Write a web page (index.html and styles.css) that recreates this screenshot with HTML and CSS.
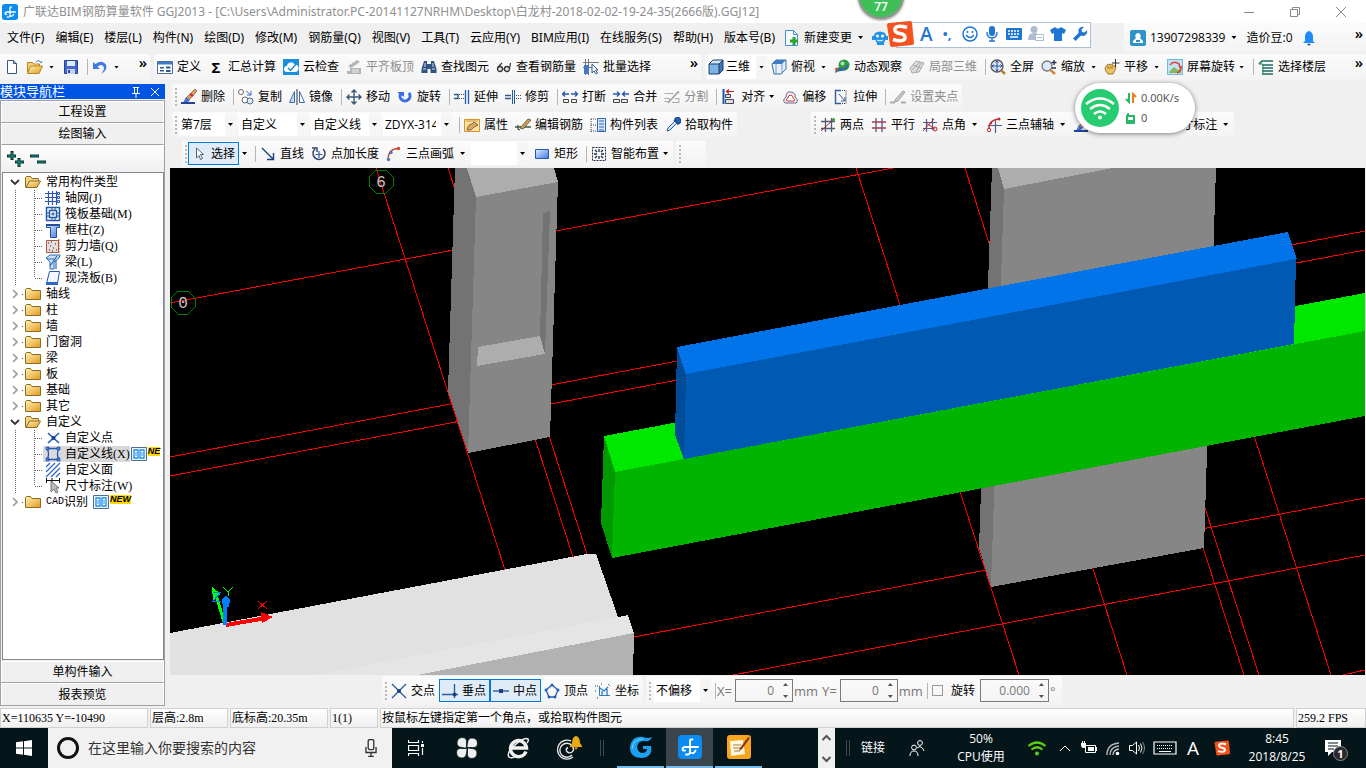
FILE: index.html
```html
<!DOCTYPE html>
<html lang="zh-CN">
<head>
    <meta charset="UTF-8">
    <meta name="viewport" content="width=device-width, initial-scale=1.0">
    <title>广联达BIM钢筋算量软件 GGJ2013</title>
    <link rel="stylesheet" href="styles.css">
</head>
<body>
    <svg class="sprite" aria-hidden="true">
        <defs>
            <linearGradient id="g-folder" x1="0" y1="0" x2="1" y2="1">
                <stop offset="0" stop-color="#fff3b8"/><stop offset="1" stop-color="#e59b1c"/>
            </linearGradient>
            <linearGradient id="g-blue" x1="0" y1="0" x2="1" y2="1">
                <stop offset="0" stop-color="#e4f0ff"/><stop offset="1" stop-color="#3f76e0"/>
            </linearGradient>
        </defs>
        <symbol id="i-app" viewBox="0 0 24 24">
            <rect width="24" height="24" rx="4" fill="#0a8cf0"/>
            <path d="M12 12V6q0-2 2.500-1.500M12 11v6q0 3-4 2.500M20 12H7.500q-3 0-3 2t2.500 1.500M12 17.500q4 2 5.500-2" fill="none" stroke="#fff" stroke-width="1.900" stroke-linecap="round"/>
        </symbol>
        <symbol id="i-new" viewBox="0 0 16 16"><path d="M3.500 1.500h6l3 3v10h-9z" fill="#fbfdff" stroke="#3a5680"/><path d="M9.500 1.500v3h3" fill="#9db8dc" stroke="#3a5680"/></symbol>
        <symbol id="i-open" viewBox="0 0 16 16"><path d="M.5 13.500v-10h5l1 1.500h6v3" fill="#f5d37a" stroke="#b58421"/><path d="M.5 14.500l3-7.500h12l-3.500 7.500z" fill="url(#g-folder)" stroke="#b58421"/><path d="M9 3q3-3 5 1l1-2" fill="none" stroke="#4a76b8"/></symbol>
        <symbol id="i-save" viewBox="0 0 16 16"><path d="M1.500 1.500h13v13h-13z" fill="#4468c8" stroke="#26409a"/><path d="M4 2h8v5H4z" fill="#dfe8fa"/><path d="M4 10h8v5H4z" fill="#c6d3ee"/><path d="M5 11h2v3H5z" fill="#26409a"/></symbol>
        <symbol id="i-undo" viewBox="0 0 16 16"><path d="M1 3v7h7L5.500 7.500q4-3 6 0 1.500 3-2.500 7.500 7-4 5-9.500-4-5-10.500-.5z" fill="#3f7be0"/></symbol>
        <symbol id="i-define" viewBox="0 0 16 16"><path d="M.5 2.500h15v12H.5z" fill="#fff" stroke="#4a6ea8"/><path d="M1 3h14v2.500H1z" fill="#3f78c8"/><path d="M3 8h4v1.500H3zM3 11h4v1.500H3zM9 7.500h4.500v2H9zM9 11h4.500v2H9z" fill="#33598f"/></symbol>
        <symbol id="i-cloud" viewBox="0 0 16 16"><rect width="16" height="16" fill="#1c8fdc"/><path d="M4 13a3 3 0 0 1 0-6 4 4 0 0 1 7.500-1.500A3.700 3.700 0 0 1 12 13z" fill="#fff"/><path d="M5 9l2.500 2.500L14 4" fill="none" stroke="#1c8fdc" stroke-width="1.500"/></symbol>
        <symbol id="i-flat" viewBox="0 0 16 16"><path d="M2 7l9-6 3 2-9 6zM4 9h11v6H4zM1 12h6v3H1z" fill="#b4b4b4"/><path d="M6 11h7M6 13h7" stroke="#eee"/></symbol>
        <symbol id="i-find" viewBox="0 0 16 16"><path d="M3 2h3v3h4V2h3l2.500 8v4H9.500v-4h-3v4H.5v-4z" fill="#31517e"/><path d="M2 10h3M11 10h3M4 4v4M12 4v4" stroke="#cfe0f7"/></symbol>
        <symbol id="i-glasses" viewBox="0 0 16 16"><circle cx="4" cy="10" r="2.500" fill="#dfe6ee" stroke="#333" stroke-width="1.300"/><circle cx="11" cy="10" r="2.500" fill="#dfe6ee" stroke="#333" stroke-width="1.300"/><path d="M6.500 10h2M2 8l4-4M13.500 10l1-6" fill="none" stroke="#333" stroke-width="1.200"/></symbol>
        <symbol id="i-batch" viewBox="0 0 16 16"><path d="M2.500 0v16M5.500 0v16M0 3.500h16M0 8.500h10" stroke="#777"/><path d="M1 6h5v9H1z" fill="#4676c4"/><path d="M9 5v9l2-2 2 3 1.500-1-2-3H15z" fill="#fff" stroke="#33598f"/></symbol>
        <symbol id="i-cube" viewBox="0 0 16 16"><path d="M1 5h10v10H1z" fill="#7fb3e4"/><path d="M1 5l4-4h10l-4 4z" fill="#cfe6fa"/><path d="M11 5l4-4v10l-4 4z" fill="#3f78b4"/><path d="M1 5l4-4h10v10l-4 4H1zM1 5h10v10M11 5l4-4" fill="none" stroke="#1c3f6a"/></symbol>
        <symbol id="i-top" viewBox="0 0 16 16"><path d="M1 5l4-4h10v9l-5 5H3z" fill="#e8f1fa" stroke="#3b6ea5"/><path d="M1 5l4-4h10l-4 4z" fill="#3f7ec0"/><path d="M11 5v10M5 5v10" stroke="#6f9ccb"/></symbol>
        <symbol id="i-orbit" viewBox="0 0 16 16"><circle cx="10" cy="6" r="5.500" fill="#2f9a48"/><circle cx="8.500" cy="4.500" r="2" fill="#a9e3a8"/><path d="M1 14q1-7 6-5 3 2 8-5-1 8-8 8-3 0-6 2z" fill="#2f6a9a"/><circle cx="2.500" cy="10" r="1.500" fill="#d05a28"/></symbol>
        <symbol id="i-local" viewBox="0 0 16 16"><path d="M1 9l6-7 8 2-5 9-7 1z" fill="#ddd" stroke="#a8a8a8"/><path d="M4 6l8 3M3 11l8-8M7 13l5-9" stroke="#a8a8a8"/></symbol>
        <symbol id="i-full" viewBox="0 0 16 16"><circle cx="7" cy="7" r="6" fill="#dbe9fa" stroke="#555" stroke-width="1.300"/><path d="M7 2v10M2 7h10M5.500 3.500L7 2l1.500 1.500M5.500 10.500L7 12l1.500-1.500M3.500 5.500L2 7l1.500 1.500M10.500 5.500L12 7l-1.500 1.500" fill="none" stroke="#2850a0"/><path d="M11.500 11.500l3.500 3.500" stroke="#c08030" stroke-width="2.500"/></symbol>
        <symbol id="i-zoom" viewBox="0 0 16 16"><circle cx="6" cy="7" r="5" fill="#dbe9fa" stroke="#777" stroke-width="1.300"/><path d="M9.500 11l4.500 4" stroke="#d08830" stroke-width="2.500"/><path d="M13 1v5M10.500 3.500h5M11 9h4" stroke="#203050" stroke-width="1.300"/></symbol>
        <symbol id="i-pan" viewBox="0 0 16 16"><path d="M1 9l2-3 2-1 1 1 2-1 1 2 2 0 1 2-2 4-1 2H4q-3-3-3-6z" fill="#eac36b" stroke="#a77b2a"/><path d="M11.500 0v8M8 4h7.500" stroke="#333"/><path d="M4 7v3M6 7v3M8 7v3" stroke="#a77b2a"/></symbol>
        <symbol id="i-spin" viewBox="0 0 16 16"><rect x=".5" y=".5" width="15" height="15" fill="#bfe3f7" stroke="#74b8de"/><path d="M2 13l5-5 4 3 3-2v5H2z" fill="#86b75c"/><path d="M3 6q4-5 9-1l1 4M10 14q5-2 4-7" fill="none" stroke="#e23c2c" stroke-width="1.500"/></symbol>
        <symbol id="i-floors" viewBox="0 0 16 16"><path d="M1 5l3-3h11M4 6h11M4 9h11M4 12h11M4 15h11" fill="none" stroke="#1f6a62" stroke-width="1.600"/><path d="M1 5h4v10" fill="none" stroke="#2b8a52"/></symbol>
        <symbol id="i-erase" viewBox="0 0 16 16"><path d="M14 0l2 2-8 9-3-2z" fill="#d7a05b" stroke="#7b4b22" stroke-width=".7"/><path d="M5 8l4 3-3 3H2z" fill="#4b6fd0"/><path d="M0 14h14" stroke="#22459a" stroke-width="2"/><path d="M9 5l3 2" stroke="#c02a2a" stroke-width="2"/></symbol>
        <symbol id="i-copy" viewBox="0 0 16 16"><circle cx="3" cy="3" r="2.500" fill="#fff" stroke="#666"/><circle cx="7" cy="11" r="3" fill="#fff" stroke="#666"/><circle cx="12" cy="12" r="3" fill="#dde6f4" stroke="#506a94"/><path d="M8 2l5 4M13 2v4H9" fill="none" stroke="#3d6cc0"/></symbol>
        <symbol id="i-mirror" viewBox="0 0 16 16"><path d="M.5 13.500l5-11v11z" fill="#c9daf3" stroke="#3d6cb0"/><path d="M15.500 13.500l-5-11v11z" fill="#fff" stroke="#3d6cb0"/><path d="M8 0v16" stroke="#333"/></symbol>
        <symbol id="i-move" viewBox="0 0 16 16"><path d="M8 1v14M1 8h14M5.500 3.500L8 1l2.500 2.500M5.500 12.500L8 15l2.500-2.500M3.500 5.500L1 8l2.500 2.500M12.500 5.500L15 8l-2.500 2.500" fill="none" stroke="#3c5878" stroke-width="1.400"/></symbol>
        <symbol id="i-rotate" viewBox="0 0 16 16"><path d="M4 4a5 5 0 1 0 8 0" fill="none" stroke="#3a6ee0" stroke-width="3"/><path d="M0 3h7v5z" fill="#3a6ee0"/></symbol>
        <symbol id="i-extend" viewBox="0 0 16 16"><path d="M0 5.500h4v4H0" fill="none" stroke="#30588e" stroke-width="1.400"/><path d="M5 5.500h5M5 9.500h5" stroke="#4a4a4a" stroke-dasharray="1 1"/><path d="M11.500 1v14M14.500 1v14" stroke="#1d5aa8" stroke-width="1.300"/></symbol>
        <symbol id="i-trim" viewBox="0 0 16 16"><path d="M0 6.500h6M0 9.500h6" stroke="#30588e" stroke-width="1.400"/><path d="M11 6.500h5M11 9.500h5" stroke="#4a4a4a" stroke-dasharray="1 1"/><path d="M7.500 1v14M9.500 1v14" stroke="#1d5aa8"/></symbol>
        <symbol id="i-break" viewBox="0 0 16 16"><path d="M1.500 10.500h5v3h-5zM9.500 10.500h5v3h-5z" fill="#eee" stroke="#444"/><path d="M0 5h7M3 2.500L.5 5 3 7.500M9 5h7M13 2.500L15.500 5 13 7.500" fill="none" stroke="#2b57b8" stroke-width="1.300"/></symbol>
        <symbol id="i-join" viewBox="0 0 16 16"><path d="M.5 10.500h6v3h-6zM8.500 10.500h6v3h-6z" fill="#eee" stroke="#444"/><path d="M0 5h7M4 2.500L6.500 5 4 7.500M9 5h7M12 2.500L9.500 5 12 7.500" fill="none" stroke="#2b57b8" stroke-width="1.300"/></symbol>
        <symbol id="i-split" viewBox="0 0 16 16"><path d="M.5 4.500h9M.5 12.500h5v-3h-5M8 13.500h7v-4h-4" fill="none" stroke="#aaa"/><path d="M4 14L14 3l1 1" fill="none" stroke="#a2a2a2" stroke-width="1.600"/></symbol>
        <symbol id="i-align" viewBox="0 0 16 16"><path d="M2.500 0v15" stroke="#1d5aa8" stroke-width="2"/><path d="M4.500 10.500h8v4h-8zM4.500 5.500h5v3h-5z" fill="#dde" stroke="#445"/><path d="M13 2.500H6M8 .5L5.500 2.500 8 4.500" fill="none" stroke="#c32020" stroke-width="1.200"/></symbol>
        <symbol id="i-offset" viewBox="0 0 16 16"><path d="M3 14q-3-3 1-6 0-6 5-5 5 1 4 5 4 3 1 6z" fill="#fdeae8" stroke="#5b6c9c"/><path d="M5 12q-2-2 1-3 0-3 3-3 2 1 2 3 3 1 1 3z" fill="#fff" stroke="#c33a3a"/></symbol>
        <symbol id="i-stretch" viewBox="0 0 16 16"><path d="M8 14.500H2.500v-13H8" fill="none" stroke="#31609c" stroke-width="1.400"/><path d="M9 1.500h4v13H9" fill="none" stroke="#333" stroke-dasharray="1 1"/><path d="M6 5l6 7M12 8v4H8" fill="none" stroke="#31609c"/></symbol>
        <symbol id="i-grip" viewBox="0 0 16 16"><path d="M0 13.500h5M11 13.500h5" stroke="#aaa" stroke-width="2"/><path d="M5 11L13 2l2 1-7 9-3 1z" fill="#c9c9c9" stroke="#a0a0a0"/></symbol>
        <symbol id="i-props" viewBox="0 0 16 16"><path d="M.5 2.500h15v12H.5z" fill="#fbe3a2" stroke="#d8962a"/><path d="M2 4h12" stroke="#d8962a"/><path d="M3 13q1-6 5-6l2-2 4 3-4 2-3 3z" fill="#e6a64a" stroke="#4c4c6c" stroke-width=".8"/></symbol>
        <symbol id="i-rebar" viewBox="0 0 16 16"><path d="M0 10h16M3 8v4l2 1" fill="none" stroke="#3b5a44" stroke-width="1.300"/><path d="M5 11l8-9 3 1-8 9z" fill="#c8a35d" stroke="#5c4424" stroke-width=".8"/></symbol>
        <symbol id="i-list" viewBox="0 0 16 16"><path d="M7.500 1.500h8v13h-8z" fill="#dce9fa" stroke="#2f64b0"/><path d="M9 4h5M9 7h5M9 10h5M9 13h5" stroke="#2f64b0"/><path d="M1 2h5M1 2v13M1 8h5M1 14h5" stroke="#444" stroke-dasharray="1 1"/></symbol>
        <symbol id="i-pick" viewBox="0 0 16 16"><path d="M2 14l1-3 7-7 2 2-7 7z" fill="#cfe4fb" stroke="#32639f"/><path d="M9 3l4 4M10 2q3-3 5 0t-2 5z" stroke="#1b4d8e" fill="#2d69b8" stroke-width="1.500"/></symbol>
        <symbol id="i-axis2" viewBox="0 0 16 16"><path d="M5.500 1v14M11.500 1v14M1 4.500h14M1 11.500h14" stroke="#555c78" stroke-width="1.300"/><path d="M1 14L14 2" stroke="#9c2424"/><circle cx="13.500" cy="2.500" r="1.500" fill="#36a036"/></symbol>
        <symbol id="i-axis" viewBox="0 0 16 16"><path d="M5 1v14M11 1v14" stroke="#43619c" stroke-width="1.300"/><path d="M1 5h14M1 11h14" stroke="#b03a4c" stroke-width="1.300"/></symbol>
        <symbol id="i-axisa" viewBox="0 0 16 16"><path d="M4.500 2v13M10.500 1v12M1 5.500h14M1 11.500h10" stroke="#4c5c8c" stroke-width="1.200"/><path d="M1 14L12 2M4 6l9 6" stroke="#b23030"/><circle cx="13" cy="12" r="2" fill="none" stroke="#c02222"/></symbol>
        <symbol id="i-axis3" viewBox="0 0 16 16"><path d="M9.500 3v13M2 8.500h14" stroke="#4c5c8c" stroke-width="1.200"/><path d="M3 13Q2 3 13 2" fill="none" stroke="#c52a2a" stroke-width="1.400"/><circle cx="3" cy="13" r="1.700" fill="#f0f0f0" stroke="#c52a2a"/><circle cx="5" cy="6" r="1.300" fill="#c52a2a"/><circle cx="13" cy="2" r="1.500" fill="#c52a2a"/></symbol>
        <symbol id="i-cursor" viewBox="0 0 16 16"><path d="M5.500 2v10l2.500-2.500 1.500 4 2-1-2-4h3z" fill="#fff" stroke="#52617c"/></symbol>
        <symbol id="i-line" viewBox="0 0 16 16"><path d="M2 2l11 11M13.500 7v6.500H7" fill="none" stroke="#1d3f7c" stroke-width="1.400"/></symbol>
        <symbol id="i-length" viewBox="0 0 16 16"><path d="M4 3a6 6 0 1 0 8 0M1 2h5v4" fill="none" stroke="#39456c" stroke-width="1.500"/><path d="M8 5v7M4.500 8.500h7" stroke="#2d61a8" stroke-width="1.200"/></symbol>
        <symbol id="i-arc" viewBox="0 0 16 16"><path d="M2 14Q2 3 12 2.500" fill="none" stroke="#c84a36" stroke-width="1.400"/><circle cx="2.500" cy="13.500" r="1.700" fill="#4778c4"/><circle cx="5" cy="6.500" r="1.700" fill="#4778c4"/><circle cx="12.500" cy="2.500" r="1.700" fill="#c84a36"/></symbol>
        <symbol id="i-rect" viewBox="0 0 16 16"><path d="M1.500 3.500h13v9h-13z" fill="url(#g-blue)" stroke="#2457c0"/></symbol>
        <symbol id="i-smart" viewBox="0 0 16 16"><path d="M1.500 1.500h13v13h-13z" fill="none" stroke="#1e2a44" stroke-dasharray="2 1"/><path d="M8 3v3M8 10v3M3 8h3M10 8h3M4 4l2 2M12 12l-2-2M12 4l-2 2M4 12l2-2" stroke="#1e2a44" stroke-width="1.300"/></symbol>
        <symbol id="i-cross" viewBox="0 0 16 16"><path d="M1 1l14 14M15 1L1 15" stroke="#2c5e9c" stroke-width="1.400"/><circle cx="8" cy="8" r="2" fill="#1d3f8c"/></symbol>
        <symbol id="i-perp" viewBox="0 0 16 16"><path d="M12.500 1v14M0 11.500h16" stroke="#2c5e9c" stroke-width="1.400"/><circle cx="12.500" cy="11.500" r="2" fill="#1d3f8c"/></symbol>
        <symbol id="i-mid" viewBox="0 0 16 16"><path d="M0 8h16" stroke="#2c5e9c" stroke-width="1.400"/><path d="M6 6h4v4H6z" fill="#1d3f8c"/></symbol>
        <symbol id="i-vertex" viewBox="0 0 16 16"><path d="M8 2l6 5-3 7H5L2 7z" fill="none" stroke="#2c5e9c" stroke-width="1.300"/><circle cx="8" cy="2" r="1.500" fill="#1d5fd0"/><circle cx="14" cy="7" r="1.500" fill="#1d5fd0"/><circle cx="2" cy="7" r="1.500" fill="#1d5fd0"/><circle cx="5" cy="14" r="1.500" fill="#1d5fd0"/><circle cx="11" cy="14" r="1.500" fill="#1d5fd0"/></symbol>
        <symbol id="i-coord" viewBox="0 0 16 16"><path d="M4.500 3v9.500H15" fill="none" stroke="#2c7cc0"/><path d="M5 5l4 3 4-4M7 12V8M12 12V6" fill="none" stroke="#2c7cc0" stroke-width="1.300"/><path d="M0 3h3M2 15h2M6 1h2M13 1l2 2M0 8h2" stroke="#333" stroke-dasharray="1 1"/></symbol>
        <symbol id="i-change" viewBox="0 0 16 16"><path d="M1.500.5h8l4 4v11h-12z" fill="#f5fbff" stroke="#4793d0"/><path d="M9.500.5v4h4" fill="none" stroke="#4793d0"/><path d="M10 7v8M6 11h8" stroke="#2fa32f" stroke-width="3"/></symbol>
        <symbol id="i-mascot" viewBox="0 0 16 16"><path d="M3 3q5-3 10 0 2 3 1 6-2 2-2 6H5q0-4-3-6-1-3 1-6z" fill="#2492e6"/><path d="M0 6h3v4H0zM13 6h3v4h-3z" fill="#2492e6"/><circle cx="5.500" cy="6" r="1.500" fill="#fff"/><circle cx="10.500" cy="6" r="1.500" fill="#fff"/><path d="M5 10q3 2 6 0" stroke="#fff" fill="none"/></symbol>
        <symbol id="i-user" viewBox="0 0 16 16"><rect width="16" height="16" rx="2" fill="#2d93c9"/><path d="M8 3a3 3 0 0 1 2 5l3 3v2H3v-2l3-3a3 3 0 0 1 2-5z" fill="#fff"/><path d="M6 10h4v2H6z" fill="#2d93c9"/></symbol>
        <symbol id="i-bell" viewBox="0 0 16 16"><path d="M8 1q4 1 4 6v4l2 2H2l2-2V7q0-5 4-6z" fill="#1e8cf5"/><path d="M6.500 14.500h3" stroke="#1a4f94" stroke-width="1.500"/></symbol>
        <!-- tree -->
        <symbol id="t-folder" viewBox="0 0 16 16"><path d="M.5 13.500v-10l1-1h4l1.500 2h8.500v9z" fill="url(#g-folder)" stroke="#8c6a28"/></symbol>
        <symbol id="t-folder-open" viewBox="0 0 16 16"><path d="M.5 13.500v-10l1-1h4l1.500 2h6.500v3" fill="#f4d57c" stroke="#8c6a28"/><path d="M1 13.500l3.500-6.500h11L12 13.500z" fill="url(#g-folder)" stroke="#8c6a28"/></symbol>
        <symbol id="t-closed" viewBox="0 0 16 16"><path d="M6 4l4 4-4 4" fill="none" stroke="#9a9a9a" stroke-width="1.600"/><path d="M15 8.500h3" stroke="#666" stroke-dasharray="1 1"/></symbol>
        <symbol id="t-opened" viewBox="0 0 16 16"><path d="M4 6l4 4 4-4" fill="none" stroke="#333" stroke-width="1.800"/></symbol>
        <symbol id="t-branch" viewBox="0 0 36 16"><path d="M8.500 0v16M27.500 0v16M28 8.500h9" stroke="#666" stroke-dasharray="1 1"/></symbol>
        <symbol id="t-last" viewBox="0 0 36 16"><path d="M8.500 0v16M27.500 0v8M28 8.500h9" stroke="#666" stroke-dasharray="1 1"/></symbol>
        <symbol id="t-grid" viewBox="0 0 16 16"><path d="M3.500 1v14M7.500 1v14M11.500 1v14M0 3.500h14M0 7.500h14M0 11.500h14" stroke="#2a55b5" stroke-width="1.200"/><path d="M12.500 2.500h2v2h-2zM12.500 6.500h2v2h-2zM12.500 10.500h2v2h-2z" fill="#fff" stroke="#2a55b5"/></symbol>
        <symbol id="t-raft" viewBox="0 0 16 16"><path d="M1.500 1.500h13v13h-13zM4.500 4.500h7v7h-7z" fill="none" stroke="#2158a5" stroke-width="1.500"/><path d="M7 2v2M10 2v2M7 12v2M10 12v2M2 7h2M2 10h2M12 7h2M12 10h2M8 6v4M6 8h4" stroke="#2158a5"/></symbol>
        <symbol id="t-column" viewBox="0 0 16 16"><path d="M1.500 2.500h13v3h-3v10h-6v-10h-4z" fill="url(#g-blue)" stroke="#214d9a"/><path d="M1 3h14" stroke="#214d9a" stroke-width="2"/></symbol>
        <symbol id="t-wall" viewBox="0 0 16 16"><path d="M1.500 2.500h12v12h-12z" fill="#e4ddda" stroke="#a8583c"/><path d="M3 5h1M6 4h1M10 6h1M5 8h1M8 10h1M4 12h1M11 12h1M7 13h1" stroke="#222"/><path d="M14 1v15" stroke="#c05428" stroke-dasharray="2 1"/></symbol>
        <symbol id="t-beam" viewBox="0 0 16 16"><path d="M1 4l4-3h10l-1 3-5 4v7H5V8z" fill="#cfe3fa" stroke="#2a66b4"/><path d="M2 5h8M12 2L5 12M11 15V6" stroke="#2a66b4" stroke-width="1.200"/></symbol>
        <symbol id="t-slab" viewBox="0 0 16 16"><path d="M4.500 1.500h10l-2 12h-11z" fill="#f1f7ff" stroke="#2259b0"/><path d="M1 12h12v3H1z" fill="#2d68c4"/></symbol>
        <symbol id="t-point" viewBox="0 0 16 16"><path d="M3 3l11 10M14 3L3 13" stroke="#2056b8" stroke-width="1.500"/><circle cx="8.500" cy="8" r="2" fill="#123f94"/></symbol>
        <symbol id="t-poly" viewBox="0 0 16 16"><path d="M3 2.500h10M3 13.500h10M2.500 3q2 5 0 10M13.500 3q-2 5 0 10" fill="none" stroke="#2056b8" stroke-width="1.300"/><path d="M1 1h3v3H1zM12 1h3v3h-3zM1 12h3v3H1zM12 12h3v3h-3z" fill="#4f82d8" stroke="#123f94" stroke-width=".6"/></symbol>
        <symbol id="t-face" viewBox="0 0 16 16"><path d="M1 5l4-4M1 10l9-9M1 15L15 1M6 15l9-9M11 15l4-4" stroke="#2a66c8" stroke-width="1.200"/></symbol>
        <symbol id="t-dim" viewBox="0 0 16 16"><path d="M1.500 0v5M14.500 0v5M7 0v5M2 2.500h12" stroke="#111"/><path d="M6 3v11l3-3 2 4 2-1-2-4h3z" fill="#b8bcc2" stroke="#777"/></symbol>
        <symbol id="t-book" viewBox="0 0 16 16"><path d="M.5 1.500h15v13H.5z" fill="#e8f4fe" stroke="#4c6f90"/><path d="M3 4h4v8H3zM9 4h4v8H9z" fill="#fff" stroke="#1f8fe8" stroke-width="1.300"/><path d="M4 7h2M4 9h2M10 7h2M10 9h2" stroke="#1f8fe8"/></symbol>
        <!-- taskbar -->
        <symbol id="k-win" viewBox="0 0 16 16"><path d="M0 2.300L7 1.300v6.200H0zM8 1.200L16 0v7.500H8zM0 8.500h7v6.200L0 13.700zM8 8.500h8V16l-8-1.200z" fill="#fff"/></symbol>
        <symbol id="k-mic" viewBox="0 0 16 16"><rect x="5.500" y=".5" width="5" height="9" rx="1.500" fill="none" stroke="#333" stroke-width="1.200"/><path d="M3.500 7v5h9V7M8 12v3M5.500 15.500h5" fill="none" stroke="#333" stroke-width="1.200"/></symbol>
        <symbol id="k-view" viewBox="0 0 16 16"><path d="M.5 0v2.500h10V0M.5 16v-2.500h10V16M.5 5.500h10v5H.5zM14.500 1v2M14.500 8v7" fill="none" stroke="#fff" stroke-width="1.200"/><path d="M13 4h3v3h-3z" fill="#fff"/></symbol>
        <symbol id="k-fan" viewBox="0 0 24 24"><path d="M11.500 12Q9 12 7 11.500 2 11 2 7q0-5 5-5.500 5 0 4.500 5zM12 11.500Q12 9 12.500 7q.5-5 4.500-5 5 0 5.500 5 0 5-5 4.500zM12.500 12q2.500 0 4.500.5 5 .5 5 4.500 0 5-5 5.500-5 0-4.500-5zM12 12.500q0 2.500-.5 4.500-.5 5-4.500 5-5 0-5.500-5 0-5 5-4.500z" fill="#eef0f0" stroke="#05161b" stroke-width=".8"/></symbol>
        <symbol id="k-ie" viewBox="0 0 24 24"><path d="M20 15.500A8 8 0 1 1 20.500 12H6" fill="none" stroke="#f2f2f2" stroke-width="3.400"/><path d="M3 21q-3-4 6-12T22 3q1 2-1 4M3 21q3 2 7-1" fill="none" stroke="#f2f2f2" stroke-width="1.500"/></symbol>
        <symbol id="k-swirl" viewBox="0 0 28 24"><path d="M18 21A9.500 9.500 0 1 1 16 5M17 19A7 7 0 1 1 17 9.500q3 4 0 6.500-3 2-5-.5t1-4" fill="none" stroke="#e8e8e8" stroke-width="1.400"/><path d="M21 0q4 1 4 7l2 3v1H15v-1l2-3q0-6 4-7z" fill="#e9aa14"/><circle cx="21" cy="12" r="1.500" fill="#c98a08"/></symbol>
        <symbol id="k-g" viewBox="0 0 24 24"><path d="M23 2Q21 7 16 6 9 5 8 12q1 6 6 6 4-1 4-4h-4v-3h8q2 11-9 12Q1 23 1 12 3 0 14 2q5 2 9 0z" fill="#1ba0f2"/><path d="M3 14Q4 4 14 4" fill="none" stroke="#77d4ff"/></symbol>
        <symbol id="k-note" viewBox="0 0 24 24"><rect width="24" height="24" rx="3" fill="#f6a51c"/><path d="M3 6l13-1 2 14-14 2z" fill="#fff8e0"/><path d="M6 10h8M6 13h8M7 16h6" stroke="#a77d32"/><path d="M21 2l-8 11-1 3 3-2 8-11z" fill="#8f3416"/></symbol>
        <symbol id="k-people" viewBox="0 0 16 16"><circle cx="5" cy="7.500" r="2.400" fill="none" stroke="#fff"/><path d="M1 16q0-5 4-5t4 5" fill="none" stroke="#fff"/><circle cx="11" cy="3" r="2.400" fill="none" stroke="#fff"/><path d="M8 8q2-2 4-1t3 4" fill="none" stroke="#fff"/></symbol>
        <symbol id="k-wifi" viewBox="0 0 20 16"><circle cx="10" cy="13.500" r="2" fill="currentColor"/><path d="M1.500 6q8.500-7 17 0M4.500 9.500q5.500-4.500 11 0" fill="none" stroke="currentColor" stroke-width="2.200"/></symbol>
        <symbol id="k-wifi3" viewBox="0 0 40 40"><circle cx="20" cy="20" r="19" fill="#28cc70"/><path d="M6 16q14-11 28 0M10 21q10-8 20 0M14 26q6-5 12 0" fill="none" stroke="#fff" stroke-width="2.500"/><circle cx="20" cy="29.500" r="2" fill="#fff"/></symbol>
        <symbol id="k-battery" viewBox="0 0 16 16"><path d="M4.500 5.500h10v7h-10z" fill="none" stroke="#fff"/><path d="M7 7h6v4H7zM15 7h1v4h-1zM0 3h5v3L3.500 8h-2L0 6zM1 1h1v2H1zM3 1h1v2H3z" fill="#fff"/></symbol>
        <symbol id="k-net" viewBox="0 0 16 16"><path d="M2 15Q2 4 14 3M5 15q0-8 9-9M8 15q0-5 6-6" fill="none" stroke="#bbb" stroke-width="1.400"/><circle cx="12.500" cy="13.500" r="1.800" fill="#fff"/></symbol>
        <symbol id="k-sound" viewBox="0 0 16 16"><path d="M.5 5.500h3l4-3.500v12l-4-3.500h-3z" fill="none" stroke="#fff"/><path d="M9.500 5q2 3 0 6M11.500 3.500q3 4.500 0 9" fill="none" stroke="#fff"/><path d="M13.500 2q4 6 0 12" fill="none" stroke="#888"/></symbol>
        <symbol id="k-keys" viewBox="0 0 24 16"><path d="M1 2h22v12H1z" fill="none" stroke="#fff" stroke-width="1.200"/><path d="M4 5.500h16M4 8.500h16" stroke="#fff" stroke-dasharray="1 1"/><path d="M6 11.500h12" stroke="#fff"/></symbol>
        <symbol id="k-sogou" viewBox="0 0 28 28"><path d="M3 3l21-2q2 0 2 2l2 20q0 2-2 2L6 27q-2 0-2-2L1 5q0-2 2-2z" fill="#f4511e"/><path d="M21 7.500q-10-3-12 1-1 4 5 5t5 5q-2 4-12 1" fill="none" stroke="#fff" stroke-width="3.500"/></symbol>
        <symbol id="k-msg" viewBox="0 0 16 16"><path d="M0 0h16v12H7l-4 4v-4H0z" fill="#fff"/><path d="M3 3h10M3 6h10M3 9h6" stroke="#05141a"/></symbol>
        <symbol id="s-smile" viewBox="0 0 16 16"><circle cx="8" cy="8" r="7" fill="none" stroke="#1f76d2" stroke-width="1.500"/><path d="M5.500 5v2M10.500 5v2M4 9q4 5 8 0" fill="none" stroke="#1f76d2" stroke-width="1.500"/></symbol>
        <symbol id="s-mic" viewBox="0 0 16 16"><rect x="5" y="0" width="6" height="10" rx="3" fill="#1f76d2"/><path d="M3 6q0 6 5 6t5-6M8 12v3M5 15h6" fill="none" stroke="#1f76d2" stroke-width="1.400"/></symbol>
        <symbol id="s-keys" viewBox="0 0 16 16"><rect y="2" width="16" height="12" rx="1" fill="#1f76d2"/><path d="M2 5h12M2 8h12" stroke="#fff" stroke-width="1.500" stroke-dasharray="2 1"/><path d="M4 11h8" stroke="#fff" stroke-width="1.500"/></symbol>
        <symbol id="s-person" viewBox="0 0 16 16"><circle cx="6" cy="3.500" r="3.500" fill="#adbcd3"/><path d="M0 14q0-7 6-7h3v7z" fill="#adbcd3"/><path d="M7.500 8.500h8v6h-8zM9 11.500h5" fill="#fff" stroke="#adbcd3"/></symbol>
        <symbol id="s-shirt" viewBox="0 0 16 16"><path d="M5 1q3 3 6 0l5 3-2 4-2-1v8H4V7L2 8 0 4z" fill="#1f76d2"/></symbol>
        <symbol id="s-wrench" viewBox="0 0 16 16"><path d="M15 4a4.500 4.500 0 0 1-6 5.500L3.500 15 1 12.500 6.500 7A4.500 4.500 0 0 1 12 1L9.500 3.500l.5 2.500 2.500.5z" fill="#1f76d2"/></symbol>
    </svg>

    <header class="titlebar">
        <svg class="icon"><use href="#i-app"/></svg>
        <h1>广联达BIM钢筋算量软件 GGJ2013 - [C:\Users\Administrator.PC-20141127NRHM\Desktop\白龙村-2018-02-02-19-24-35(2666版).GGJ12]</h1>
        <div class="window-buttons">
            <button aria-label="最小化"><svg viewBox="0 0 12 12"><path d="M1 6.500h10"/></svg></button>
            <button aria-label="还原"><svg viewBox="0 0 12 12"><path d="M1.500 3.500h7v7h-7zM3.500 3V1.500h7v7H9"/></svg></button>
            <button aria-label="关闭"><svg viewBox="0 0 12 12"><path d="M1 1l10 10M11 1L1 11"/></svg></button>
        </div>
        <div class="speed-ball">77</div>
    </header>

    <nav class="menubar">
        <div class="strip menus">
            <button>文件(F)</button><button>编辑(E)</button><button>楼层(L)</button><button>构件(N)</button><button>绘图(D)</button><button>修改(M)</button><button>钢筋量(Q)</button><button>视图(V)</button><button>工具(T)</button><button>云应用(Y)</button><button>BIM应用(I)</button><button>在线服务(S)</button><button>帮助(H)</button><button>版本号(B)</button>
            <button class="tool"><svg class="icon"><use href="#i-change"/></svg>新建变更<i class="arrow"></i></button>
            <button class="tool" aria-label="助手"><svg class="icon"><use href="#i-mascot"/></svg></button>
        </div>
        <div class="strip account">
            <button class="tool"><svg class="icon"><use href="#i-user"/></svg>13907298339<i class="arrow"></i></button>
            <span class="beans">造价豆:0</span>
            <svg class="icon"><use href="#i-bell"/></svg>
            <span class="more">»</span>
        </div>
        <div class="ime">
            <svg class="ime-logo"><use href="#k-sogou"/></svg>
            <b class="ime-letter">A</b>
            <b class="ime-comma">•,</b>
            <svg class="icon"><use href="#s-smile"/></svg>
            <svg class="icon"><use href="#s-mic"/></svg>
            <svg class="icon"><use href="#s-keys"/></svg>
            <svg class="icon"><use href="#s-person"/></svg>
            <svg class="icon"><use href="#s-shirt"/></svg>
            <svg class="icon"><use href="#s-wrench"/></svg>
        </div>
    </nav>

    <div class="mainbar">
        <div class="strip files">
            <button class="tool" aria-label="新建"><svg class="icon"><use href="#i-new"/></svg></button>
            <button class="tool" aria-label="打开"><svg class="icon"><use href="#i-open"/></svg><i class="arrow"></i></button>
            <button class="tool" aria-label="保存"><svg class="icon"><use href="#i-save"/></svg></button>
            <i class="sep"></i>
            <button class="tool" aria-label="撤销"><svg class="icon"><use href="#i-undo"/></svg><i class="arrow"></i></button>
            <span class="more">»</span>
        </div>
        <div class="strip common">
            <button class="tool"><svg class="icon"><use href="#i-define"/></svg>定义</button>
            <button class="tool"><b class="icon sigma">Σ</b>汇总计算</button>
            <button class="tool"><svg class="icon"><use href="#i-cloud"/></svg>云检查</button>
            <button class="tool" disabled><svg class="icon"><use href="#i-flat"/></svg>平齐板顶</button>
            <button class="tool"><svg class="icon"><use href="#i-find"/></svg>查找图元</button>
            <button class="tool"><svg class="icon"><use href="#i-glasses"/></svg>查看钢筋量</button>
            <button class="tool"><svg class="icon"><use href="#i-batch"/></svg>批量选择</button>
            <span class="more">»</span>
        </div>
        <div class="strip views">
            <div class="combo view-combo"><svg class="icon"><use href="#i-cube"/></svg><select aria-label="视图"><option>三维</option></select><i class="arrow"></i></div>
            <button class="tool"><svg class="icon"><use href="#i-top"/></svg>俯视<i class="arrow"></i></button>
            <button class="tool"><svg class="icon"><use href="#i-orbit"/></svg>动态观察</button>
            <button class="tool" disabled><svg class="icon"><use href="#i-local"/></svg>局部三维</button>
            <i class="sep"></i>
            <button class="tool"><svg class="icon"><use href="#i-full"/></svg>全屏</button>
            <button class="tool"><svg class="icon"><use href="#i-zoom"/></svg>缩放<i class="arrow"></i></button>
            <button class="tool"><svg class="icon"><use href="#i-pan"/></svg>平移<i class="arrow"></i></button>
            <button class="tool"><svg class="icon"><use href="#i-spin"/></svg>屏幕旋转<i class="arrow near"></i></button>
            <i class="sep"></i>
            <button class="tool"><svg class="icon"><use href="#i-floors"/></svg>选择楼层</button>
            <span class="more">»</span>
        </div>
    </div>

    <div class="workspace">
        <aside class="sidebar">
            <h2>模块导航栏
                <svg viewBox="0 0 32 12"><path d="M3 1.500h6M4.500 1v6M7.500 1v6M2 7.500h8M6 8v4M21 2l8 8M29 2l-8 8"/></svg>
            </h2>
            <div class="module">
                <button>工程设置</button>
                <button>绘图输入</button>
                <div class="expand-bar">
                    <button aria-label="展开和折叠"><svg viewBox="0 0 42 16"><path class="edge" d="M5 0v9M0 5h9M12 7v9M8 11h9M23 5h9M30 11h9"/><path d="M5 1v7M1 5h7M12 8v7M9 11h7M24 5h7M31 11h7"/></svg></button>
                </div>
                <ul class="tree">
                    <li><svg class="icon"><use href="#t-opened"/></svg><svg class="icon"><use href="#t-folder-open"/></svg>常用构件类型</li>
                    <li><svg class="branch"><use href="#t-branch"/></svg><svg class="icon"><use href="#t-grid"/></svg>轴网(J)</li>
                    <li><svg class="branch"><use href="#t-branch"/></svg><svg class="icon"><use href="#t-raft"/></svg>筏板基础(M)</li>
                    <li><svg class="branch"><use href="#t-branch"/></svg><svg class="icon"><use href="#t-column"/></svg>框柱(Z)</li>
                    <li><svg class="branch"><use href="#t-branch"/></svg><svg class="icon"><use href="#t-wall"/></svg>剪力墙(Q)</li>
                    <li><svg class="branch"><use href="#t-branch"/></svg><svg class="icon"><use href="#t-beam"/></svg>梁(L)</li>
                    <li><svg class="branch"><use href="#t-last"/></svg><svg class="icon"><use href="#t-slab"/></svg>现浇板(B)</li>
                    <li><svg class="icon"><use href="#t-closed"/></svg><svg class="icon"><use href="#t-folder"/></svg>轴线</li>
                    <li><svg class="icon"><use href="#t-closed"/></svg><svg class="icon"><use href="#t-folder"/></svg>柱</li>
                    <li><svg class="icon"><use href="#t-closed"/></svg><svg class="icon"><use href="#t-folder"/></svg>墙</li>
                    <li><svg class="icon"><use href="#t-closed"/></svg><svg class="icon"><use href="#t-folder"/></svg>门窗洞</li>
                    <li><svg class="icon"><use href="#t-closed"/></svg><svg class="icon"><use href="#t-folder"/></svg>梁</li>
                    <li><svg class="icon"><use href="#t-closed"/></svg><svg class="icon"><use href="#t-folder"/></svg>板</li>
                    <li><svg class="icon"><use href="#t-closed"/></svg><svg class="icon"><use href="#t-folder"/></svg>基础</li>
                    <li><svg class="icon"><use href="#t-closed"/></svg><svg class="icon"><use href="#t-folder"/></svg>其它</li>
                    <li><svg class="icon"><use href="#t-opened"/></svg><svg class="icon"><use href="#t-folder-open"/></svg>自定义</li>
                    <li><svg class="branch"><use href="#t-branch"/></svg><svg class="icon"><use href="#t-point"/></svg>自定义点</li>
                    <li><svg class="branch"><use href="#t-branch"/></svg><span class="selected"><svg class="icon"><use href="#t-poly"/></svg>自定义线(X)</span><svg class="icon book"><use href="#t-book"/></svg><em class="new">NE</em></li>
                    <li><svg class="branch"><use href="#t-branch"/></svg><svg class="icon"><use href="#t-face"/></svg>自定义面</li>
                    <li><svg class="branch"><use href="#t-last"/></svg><svg class="icon"><use href="#t-dim"/></svg>尺寸标注(W)</li>
                    <li><svg class="icon"><use href="#t-closed"/></svg><svg class="icon"><use href="#t-folder"/></svg><span class="mono">CAD</span>识别<svg class="icon book spaced"><use href="#t-book"/></svg><em class="new">NEW</em></li>
                </ul>
                <button>单构件输入</button>
                <button>报表预览</button>
            </div>
        </aside>

        <main class="content">
            <div class="bar">
                <div class="strip">
                    <i class="grip"></i>
                    <button class="tool"><svg class="icon"><use href="#i-erase"/></svg>删除</button>
                    <i class="sep"></i>
                    <button class="tool"><svg class="icon"><use href="#i-copy"/></svg>复制</button>
                    <button class="tool"><svg class="icon"><use href="#i-mirror"/></svg>镜像</button>
                    <i class="sep"></i>
                    <button class="tool"><svg class="icon"><use href="#i-move"/></svg>移动</button>
                    <button class="tool"><svg class="icon"><use href="#i-rotate"/></svg>旋转</button>
                    <i class="sep"></i>
                    <button class="tool"><svg class="icon"><use href="#i-extend"/></svg>延伸</button>
                    <button class="tool"><svg class="icon"><use href="#i-trim"/></svg>修剪</button>
                    <i class="sep"></i>
                    <button class="tool"><svg class="icon"><use href="#i-break"/></svg>打断</button>
                    <button class="tool"><svg class="icon"><use href="#i-join"/></svg>合并</button>
                    <button class="tool" disabled><svg class="icon"><use href="#i-split"/></svg>分割</button>
                    <i class="sep"></i>
                    <button class="tool"><svg class="icon"><use href="#i-align"/></svg>对齐<i class="arrow near"></i></button>
                    <button class="tool"><svg class="icon"><use href="#i-offset"/></svg>偏移</button>
                    <button class="tool"><svg class="icon"><use href="#i-stretch"/></svg>拉伸</button>
                    <i class="sep"></i>
                    <button class="tool" disabled><svg class="icon"><use href="#i-grip"/></svg>设置夹点</button>
                </div>
            </div>
            <div class="bar">
                <div class="strip">
                    <i class="grip"></i>
                    <div class="combo floor"><select aria-label="楼层"><option>第7层</option></select><i class="arrow"></i></div>
                    <div class="combo"><select aria-label="构件类别"><option>自定义</option></select><i class="arrow"></i></div>
                    <div class="combo"><select aria-label="构件类型"><option>自定义线</option></select><i class="arrow"></i></div>
                    <div class="combo"><select aria-label="构件"><option>ZDYX-314</option></select><i class="arrow"></i></div>
                    <i class="sep"></i>
                    <button class="tool"><svg class="icon"><use href="#i-props"/></svg>属性</button>
                    <button class="tool"><svg class="icon"><use href="#i-rebar"/></svg>编辑钢筋</button>
                    <button class="tool"><svg class="icon"><use href="#i-list"/></svg>构件列表</button>
                    <button class="tool"><svg class="icon"><use href="#i-pick"/></svg>拾取构件</button>
                </div>
                <div class="strip axes">
                    <i class="grip"></i>
                    <button class="tool"><svg class="icon"><use href="#i-axis2"/></svg>两点</button>
                    <button class="tool"><svg class="icon"><use href="#i-axis"/></svg>平行</button>
                    <button class="tool"><svg class="icon"><use href="#i-axisa"/></svg>点角<i class="arrow"></i></button>
                    <button class="tool"><svg class="icon"><use href="#i-axis3"/></svg>三点辅轴<i class="arrow"></i></button>
                    <button class="tool"><svg class="icon"><use href="#i-erase"/></svg>删除辅轴</button>
                    <button class="tool"><svg class="icon"><use href="#t-dim"/></svg>尺寸标注<i class="arrow"></i></button>
                </div>
            </div>
            <div class="bar draw">
                <div class="strip">
                    <i class="grip"></i>
                    <button class="tool on"><svg class="icon"><use href="#i-cursor"/></svg>选择</button>
                    <button class="tool" aria-label="选择方式"><i class="arrow alone"></i></button>
                    <i class="sep"></i>
                    <button class="tool"><svg class="icon"><use href="#i-line"/></svg>直线</button>
                    <button class="tool"><svg class="icon"><use href="#i-length"/></svg>点加长度</button>
                    <button class="tool"><svg class="icon"><use href="#i-arc"/></svg>三点画弧<i class="arrow"></i></button>
                    <div class="combo floor"><select aria-label="弧参数"><option></option></select><i class="arrow"></i></div>
                    <button class="tool"><svg class="icon"><use href="#i-rect"/></svg>矩形</button>
                    <i class="sep"></i>
                    <button class="tool"><svg class="icon"><use href="#i-smart"/></svg>智能布置<i class="arrow near"></i></button>
                </div>
                <div class="strip empty"><i class="grip"></i></div>
            </div>

            <svg class="scene" viewBox="170 168 1195 507" preserveAspectRatio="xMidYMid slice" role="img" aria-label="三维视图">
                <path class="axis-lines" d="M170 303L893 168M170 457L1365 231M170 476L1365 250M634 637L1365 498M733 675L1365 555M1343 675L1365 670M376 168L505 570M448 168L573 557M463 168L587 554M856 168L1019 675M965 168L1127 675M1081 168L1244 675M1095 168L1259 675M1168 168L1331 675"/>
                <!-- left column -->
                <path fill="#737373" d="M455 168h12l9 29-8 256-20-62z"/>
                <path fill="#868686" d="M476 197l82-16-8 256-82 16z"/>
                <path fill="#adadad" d="M467 168h87l4 14-82 15z"/>
                <path fill="#737373" d="M543 213l7-2-5 143-5-18z"/>
                <path fill="#adadad" d="M478 347l62-11 5 18-68 12z"/>
                <!-- right column -->
                <path fill="#737373" d="M992 168h6l6 21-13 398-12-39z"/>
                <path fill="#868686" d="M1004 189l109-21h103l-12 380-213 39z"/>
                <path fill="#adadad" d="M998 168h115l-109 21z"/>
                <!-- green beam -->
                <path fill="#00e800" d="M604 436L1365 293v38L615 472z"/>
                <path fill="#00b400" d="M615 472L1365 331v85L612 558z"/>
                <path fill="#009a00" d="M604 436l11 36-3 86-11-35z"/>
                <!-- blue beam -->
                <path fill="#0074e8" d="M677 347l611-115 9 27-611 115z"/>
                <path fill="#005ab4" d="M686 374l610-115-2 85-610 115z"/>
                <path fill="#004c96" d="M677 347l9 27-2 85-9-24z"/>
                <!-- slab -->
                <path fill="#e1e1e1" d="M170 633L587 554h9l22 63-303 58H170z"/>
                <path fill="#e5e5e5" d="M315 675L618 617l10-2 6 18-217 42z"/>
                <path fill="#b2b2b2" d="M417 675L634 633l-1 42z"/>
                <g class="axis-marks">
                    <path d="M376 170h10l7 7v9l-7 7h-10l-7-7v-9zM178 291h10l7 7v9l-7 7h-10l-7-7v-9z"/>
                    <text x="381" y="187">6</text>
                    <text x="183" y="308">0</text>
                </g>
                <path d="M226 625l40-7" stroke="#f00" stroke-width="4"/><path d="M261 612l12 5-11 6z" fill="#f00"/>
                <path d="M225 625l-9-30" stroke="#0f0" stroke-width="3"/><path d="M212 587l9 7-8 6z" fill="#0f0"/>
                <path d="M225 625v-22" stroke="#0080ff" stroke-width="4"/><path d="M226 595l4 5-1 7h-6l-1-7z" fill="#0080ff"/>
                <path d="M258 601l9 8M267 601l-9 8" stroke="#f00"/>
                <path d="M223 587l5 5 5-5M228 592v4" stroke="#0f0" fill="none"/>
                <path d="M213 592h8l-8 9h8" stroke="#0080ff" fill="none"/>
            </svg>

            <div class="bar snap">
                <div class="strip">
                    <i class="grip"></i>
                    <button class="tool"><svg class="icon"><use href="#i-cross"/></svg>交点</button>
                    <button class="tool on"><svg class="icon"><use href="#i-perp"/></svg>垂点</button>
                    <button class="tool on"><svg class="icon"><use href="#i-mid"/></svg>中点</button>
                    <button class="tool"><svg class="icon"><use href="#i-vertex"/></svg>顶点</button>
                    <button class="tool"><svg class="icon"><use href="#i-coord"/></svg>坐标</button>
                </div>
                <div class="strip offset">
                    <i class="grip"></i>
                    <div class="combo floor"><select aria-label="偏移方式"><option>不偏移</option></select><i class="arrow"></i></div>
                    <i class="sep"></i>
                    <label for="off-x">X=</label>
                    <span class="spin"><input id="off-x" value="0"><i></i></span><span class="unit">mm</span>
                    <label for="off-y">Y=</label>
                    <span class="spin"><input id="off-y" value="0"><i></i></span><span class="unit">mm</span>
                    <i class="sep"></i>
                    <input type="checkbox" id="turn"><label class="turn" for="turn">旋转</label>
                    <span class="spin wide"><input aria-label="旋转角度" value="0.000"><i></i></span><span class="unit">°</span>
                </div>
            </div>
        </main>
        <div class="net-pill">
            <svg class="net-logo"><use href="#k-wifi3"/></svg>
            <div>
                <p><svg viewBox="0 0 12 12"><path d="M4 1v9L1 7" stroke="#28b868"/><path d="M8 11V2l3 3" stroke="#f07c10"/></svg>0.00K/s</p>
                <p><svg viewBox="0 0 12 12"><path d="M2 4h7v7H2z" stroke="#28b868"/><path d="M3 1v4M2 9h7" stroke="#28b868"/></svg>0</p>
            </div>
        </div>
    </div>

    <footer class="statusbar">
        <span class="coords">X=110635 Y=-10490</span>
        <span class="height">层高:2.8m</span>
        <span class="base">底标高:20.35m</span>
        <span class="count">1(1)</span>
        <span class="hint">按鼠标左键指定第一个角点，或拾取构件图元</span>
        <span class="fps">259.2 FPS</span>
    </footer>

    <div class="taskbar">
        <button class="start" aria-label="开始"><svg class="icon"><use href="#k-win"/></svg></button>
        <div class="search"><i class="ring"></i><input type="text" aria-label="搜索" placeholder="在这里输入你要搜索的内容"><svg class="mic"><use href="#k-mic"/></svg></div>
        <button class="task" aria-label="任务视图"><svg class="icon"><use href="#k-view"/></svg></button>
        <button class="task" aria-label="浏览器"><svg class="large"><use href="#k-fan"/></svg></button>
        <button class="task" aria-label="IE"><svg class="large"><use href="#k-ie"/></svg></button>
        <button class="task" aria-label="通知程序"><svg class="swirl"><use href="#k-swirl"/></svg></button>
        <i class="divider"></i>
        <button class="task running first" aria-label="广联达"><svg class="large"><use href="#k-g"/></svg></button>
        <button class="task running current" aria-label="钢筋算量"><svg class="large"><use href="#i-app"/></svg></button>
        <button class="task running" aria-label="记事"><svg class="large"><use href="#k-note"/></svg></button>
        <div class="scroller"><svg viewBox="0 0 16 40"><path d="M4 12l4-4 4 4M4 29l4 4 4-4"/></svg></div>
        <i class="divider"></i>
        <span class="links">链接</span>
        <svg class="icon people"><use href="#k-people"/></svg>
        <div class="two-line cpu">50%<br>CPU使用</div>
        <svg class="wifi"><use href="#k-wifi"/></svg>
        <div class="tray">
            <svg class="chev" viewBox="0 0 12 12"><path d="M1 9l5-5 5 5"/></svg>
            <svg class="icon"><use href="#k-battery"/></svg>
            <svg class="icon"><use href="#k-net"/></svg>
            <svg class="icon"><use href="#k-sound"/></svg>
            <svg class="keys"><use href="#k-keys"/></svg>
            <span class="ime-mode">A</span>
            <svg class="icon"><use href="#k-sogou"/></svg>
        </div>
        <div class="two-line clock">8:45<br>2018/8/25</div>
        <button class="action" aria-label="通知"><svg class="icon"><use href="#k-msg"/></svg><b>1</b></button>
    </div>
</body>
</html>
```
FILE: styles.css
```css
* {
    box-sizing: border-box;
}
body {
    margin: 0;
    height: 100vh;
    display: flex;
    flex-direction: column;
    overflow: hidden;
    background-color: #f0f0f0;
    color: #000;
    font-family: "Open Sans", "Noto Sans CJK SC", sans-serif;
    font-size: 12px;
    line-height: 16px;
}
button, select, input {
    font: inherit;
    color: inherit;
    background: none;
    border: none;
    border-radius: 0;
    margin: 0;
    padding: 0;
    white-space: nowrap;
}
svg {
    display: block;
    flex: none;
}
.sprite {
    position: absolute;
    width: 0;
    height: 0;
}
.icon {
    width: 16px;
    height: 16px;
    flex: none;
}

/* title */
.titlebar {
    position: relative;
    display: flex;
    align-items: center;
    flex: none;
    height: 23px;
    padding: 0 2px;
    gap: 5px;
    background-color: #fff;
}
.titlebar h1 {
    flex: 1;
    margin: 0;
    font-family: "Noto Sans", "Noto Sans CJK SC", sans-serif;
    font-size: 12px;
    font-weight: 400;
    color: #8f8f8f;
    white-space: nowrap;
}
.window-buttons {
    display: flex;
}
.window-buttons button {
    width: 46px;
    height: 22px;
    display: flex;
    align-items: center;
    justify-content: center;
}
.window-buttons svg {
    width: 12px;
    height: 12px;
    fill: none;
    stroke: #888;
}
.speed-ball {
    position: absolute;
    left: 858px;
    top: -27px;
    z-index: 3;
    width: 46px;
    height: 46px;
    padding-top: 24px;
    border: 2px solid #8a9a8c;
    border-radius: 50%;
    background-color: #3fbf58;
    box-shadow: 0 1px 3px rgba(0, 0, 0, 0.5);
    color: #fff;
    font-weight: 600;
    text-align: center;
}

/* strips and tools */
.strip {
    display: flex;
    align-items: center;
    height: 100%;
    padding-left: 3px;
    border-radius: 2px;
    background: linear-gradient(#fbfbfb, #f3f3f3);
}
.tool {
    display: flex;
    align-items: center;
    gap: 4px;
    height: 23px;
    padding: 0 4px 0 3px;
}
.tool:disabled {
    color: #8d8d8d;
}
.tool.on {
    padding: 0 3px 0 2px;
    border: 1px solid #0078d7;
    background-color: #dfebf6;
}
.arrow {
    width: 5px;
    height: 3px;
    margin: 0 2px;
    flex: none;
    background-color: #000;
    clip-path: polygon(0 0, 100% 0, 50% 100%);
}
.arrow.near {
    margin: 0 1px 0 0;
}
.arrow.alone {
    margin: 0;
}
.sep {
    width: 1px;
    height: 16px;
    margin: 0 1px 0 4px;
    flex: none;
    background-color: #b5b5b5;
}
.grip {
    width: 2px;
    height: 18px;
    margin-right: 1px;
    flex: none;
    background: repeating-linear-gradient(#b8b8b8 0 2px, transparent 2px 4px);
}
.more {
    margin-left: auto;
    padding: 0 3px 10px 0;
    font-size: 15px;
    font-weight: 600;
}
.combo {
    display: flex;
    align-items: center;
    width: 69px;
    height: 23px;
    margin-right: 3px;
    padding-left: 2px;
    background: linear-gradient(to left, #f5f5f5 11px, #fff 11px);
}
.combo.floor {
    width: 57px;
}
.grip + .combo {
    margin-left: 1px;
}
.combo select {
    flex: 1;
    min-width: 0;
    appearance: none;
    overflow: hidden;
    text-overflow: clip;
}
.combo .arrow {
    margin: 0 3px 0 8px;
}

/* menu */
.menubar {
    position: relative;
    display: flex;
    justify-content: space-between;
    flex: none;
    height: 29px;
}
.menus {
    padding-left: 2px;
    background: none;
    font-family: "Noto Sans", "Noto Sans CJK SC", sans-serif;
}
.menus button:not(.tool) {
    padding: 0 6px 0 5px;
}
.account {
    width: 242px;
}
.beans {
    margin: 0 8px 0 4px;
}
.ime {
    position: absolute;
    left: 886px;
    top: -3px;
    z-index: 2;
    display: flex;
    align-items: center;
    gap: 6px;
    height: 27px;
    color: #1f76d2;
}
.ime::before {
    content: "";
    position: absolute;
    left: 10px;
    right: -3px;
    top: 2px;
    height: 24px;
    z-index: -1;
    border: 1px solid #a9bfdc;
    background-color: #fff;
}
.ime-logo {
    width: 28px;
    height: 28px;
}
.ime-letter {
    font-size: 19px;
    font-weight: 600;
}
.ime-comma {
    width: 17px;
    font-size: 13px;
    text-align: center;
}

/* main bar */
.mainbar {
    display: flex;
    gap: 4px;
    flex: none;
    height: 26px;
    margin: 2px 0 4px;
}
.files {
    width: 150px;
    padding-left: 1px;
}
.common {
    flex: 1;
    padding-left: 0;
}
.sigma {
    font-size: 15px;
    text-align: center;
}
.views {
    flex: 0 0 661px;
    padding-left: 2px;
}
.views .tool .arrow {
    margin-right: 1px;
}
.combo.view-combo {
    width: 60px;
    margin-right: 1px;
    padding-left: 1px;
}
.view-combo select {
    margin-left: 2px;
}

/* side panel */
.workspace {
    position: relative;
    display: flex;
    flex: 1;
    min-height: 0;
}
.sidebar {
    display: flex;
    flex-direction: column;
    flex: none;
    width: 165px;
    margin-right: 5px;
    padding-bottom: 2px;
    font-family: "Liberation Serif", "Noto Sans CJK SC", serif;
}
.sidebar h2 {
    display: flex;
    align-items: center;
    justify-content: space-between;
    height: 15px;
    margin: 0;
    padding-right: 3px;
    background-color: #0054e3;
    color: #fff;
    font-size: 13px;
    font-weight: 400;
}
.sidebar h2 svg {
    width: 32px;
    height: 12px;
    fill: none;
    stroke: #fff;
}
.module {
    display: flex;
    flex-direction: column;
    flex: 1;
    min-height: 0;
    margin-top: 1px;
    border: 1px solid #a0a0a0;
}
.module > button {
    height: 22px;
    flex: none;
    border: 1px solid #fff;
    border-bottom-color: #a0a0a0;
}
.module > button:last-child {
    border-bottom: none;
}
.expand-bar {
    height: 27px;
    padding: 6px;
    flex: none;
    background: linear-gradient(#fdfdfd, #f0f0f0);
}
.expand-bar svg {
    width: 42px;
    height: 16px;
    stroke: #00a08c;
    stroke-width: 1;
}
.expand-bar .edge {
    stroke: #12302c;
    stroke-width: 3;
}
.tree {
    flex: 1;
    min-height: 0;
    margin: 0 0 1px 1px;
    padding: 1px 0 0 4px;
    border: 1px solid #828790;
    background-color: #fff;
    list-style: none;
    overflow: hidden;
}
.tree li {
    display: flex;
    align-items: center;
    height: 16px;
    white-space: nowrap;
}
.tree li > .icon:first-child {
    margin-right: 2px;
    overflow: visible;
}
.tree .icon + .icon {
    margin-right: 5px;
}
.tree .branch {
    width: 36px;
    height: 16px;
    overflow: visible;
}
.tree .branch + .icon, .selected .icon {
    margin: 0 4px 0 2px;
}
.selected {
    display: flex;
    background-color: #d9d9d9;
}
.tree .book {
    margin: 0 1px;
}
.tree .spaced {
    margin-left: 5px;
}
.mono {
    font-family: "Liberation Mono", monospace;
    font-size: 10px;
}
.new {
    height: 9px;
    margin-bottom: 6px;
    background-color: #ffd800;
    font: italic 700 9px/9px "Liberation Sans", sans-serif;
}

/* drawing area */
.content {
    display: flex;
    flex-direction: column;
    flex: 1;
    min-width: 0;
    padding-right: 1px;
}
.bar {
    display: flex;
    flex: none;
    height: 25px;
    margin: 0 0 3px 2px;
}
.bar > .strip {
    flex: none;
}
.axes {
    margin-left: 74px;
}
.bar.draw {
    gap: 3px;
    margin: 1px 0 2px 12px;
}
.empty {
    width: 30px;
}
.scene {
    flex: 1;
    width: 100%;
    min-height: 0;
    background-color: #000;
    shape-rendering: crispEdges;
}
.axis-lines {
    stroke: #f00;
}
.axis-marks path {
    fill: none;
    stroke: #008000;
}
.axis-marks text {
    fill: #c8c8c8;
    font: 16px "Liberation Mono", monospace;
    text-anchor: middle;
}
.bar.snap {
    height: 29px;
    margin: 1px 0 3px 212px;
}
.snap .offset {
    margin-left: 3px;
    padding-right: 3px;
    color: #777;
    font-size: 13px;
}
.offset .combo {
    margin-right: 0;
    margin-left: 2px;
    color: #000;
    font-size: 12px;
}
.spin {
    display: flex;
    align-items: center;
    width: 58px;
    height: 23px;
    margin: 0 1px 0 3px;
    border: 1px solid #7a7a7a;
}
.spin.wide {
    width: 69px;
    margin-left: 5px;
}
.spin input {
    flex: 1;
    min-width: 0;
    font-size: 12px;
    text-align: right;
}
.spin i {
    width: 5px;
    height: 15px;
    margin: 0 4px 0 9px;
    background-color: #555;
    clip-path: polygon(50% 0, 100% 20%, 0 20%, 50% 0, 50% 100%, 0 80%, 100% 80%, 50% 100%);
}
.unit {
    margin-right: 4px;
}
.unit + .sep {
    margin-left: 0;
}
.offset input[type="checkbox"] {
    width: 11px;
    height: 11px;
    margin: 0 8px 0 3px;
    appearance: none;
    border: 1px solid #999;
}
.turn {
    color: #000;
    font-size: 12px;
}

/* floating network monitor */
.net-pill {
    position: absolute;
    right: 171px;
    top: -1px;
    z-index: 4;
    display: flex;
    align-items: center;
    gap: 5px;
    width: 120px;
    height: 50px;
    padding-left: 5px;
    border-radius: 25px;
    background-color: #fff;
    box-shadow: 0 1px 5px rgba(0, 0, 0, 0.5);
    color: #555;
    font: 11px/20px "Noto Sans", sans-serif;
}
.net-logo {
    width: 40px;
    height: 40px;
}
.net-pill p {
    display: flex;
    align-items: center;
    gap: 4px;
    margin: 0;
}
.net-pill p svg {
    width: 12px;
    height: 12px;
    fill: none;
    stroke-width: 2;
}

/* status */
.statusbar {
    display: flex;
    gap: 2px;
    flex: none;
    height: 20px;
    font-family: "Liberation Serif", "Noto Sans CJK SC", serif;
}
.statusbar span {
    padding: 1px;
    border: 1px solid #d0d0d0;
    background: linear-gradient(#fff, #f0f0f0);
    white-space: nowrap;
}
.coords {
    width: 148px;
}
.height {
    width: 78px;
}
.base {
    width: 98px;
}
.count {
    width: 48px;
}
.hint {
    flex: 1;
}
.fps {
    width: 70px;
}

/* taskbar */
.taskbar {
    display: flex;
    align-items: center;
    flex: none;
    height: 40px;
    background-color: #05161b;
    color: #fff;
}
.start {
    display: flex;
    justify-content: center;
    width: 48px;
}
.search {
    display: flex;
    align-items: center;
    width: 344px;
    height: 40px;
    padding: 0 12px 0 9px;
    background-color: #f1f1f1;
    color: #333;
    font-size: 14px;
}
.search input {
    flex: 1;
    margin-left: 9px;
}
.search input::placeholder {
    color: #333;
    opacity: 1;
}
.ring {
    width: 22px;
    height: 22px;
    border: 3px solid #111;
    border-radius: 50%;
}
.mic {
    width: 18px;
    height: 18px;
}
.task {
    display: flex;
    align-items: center;
    justify-content: center;
    width: 51px;
    height: 40px;
    padding-right: 4px;
}
.large {
    width: 24px;
    height: 24px;
}
.swirl {
    width: 28px;
    height: 24px;
}
.divider {
    width: 4px;
    height: 16px;
    margin: 0 4px;
    border: solid #3c4a50;
    border-width: 0 1px;
}
.task.running {
    width: 47px;
    margin-right: 2px;
    padding-right: 0;
    border-bottom: 2px solid #76b9ed;
}
.running.first {
    margin-left: 9px;
}
.current {
    background-color: #3a464c;
}
.scroller {
    height: 40px;
    margin-left: auto;
    margin-right: 7px;
    background-color: #f0f0f0;
}
.scroller svg {
    width: 17px;
    height: 40px;
    fill: none;
    stroke: #555;
    stroke-width: 2;
}
.links {
    margin-left: 7px;
}
.people {
    margin: 0 28px 0 24px;
}
.two-line {
    line-height: 18px;
    text-align: center;
}
.cpu {
    width: 56px;
}
.wifi {
    width: 20px;
    height: 16px;
    margin: 0 12px 0 18px;
    color: #58d010;
}
.tray {
    display: flex;
    align-items: center;
    gap: 8px;
}
.chev {
    width: 12px;
    height: 12px;
    margin-right: 2px;
    fill: none;
    stroke: #fff;
}
.keys {
    width: 24px;
    height: 16px;
}
.ime-mode {
    width: 16px;
    margin-right: 5px;
    font-size: 19px;
    text-align: center;
}
.clock {
    width: 64px;
    margin-left: 15px;
}
.action {
    position: relative;
    width: 32px;
    height: 16px;
    margin-left: 16px;
    margin-right: 9px;
}
.action b {
    position: absolute;
    left: 8px;
    top: 6px;
    width: 15px;
    height: 15px;
    border: 1px solid #888;
    border-radius: 50%;
    background-color: #2a2a2a;
    font-size: 11px;
    line-height: 13px;
    text-align: center;
}
```
